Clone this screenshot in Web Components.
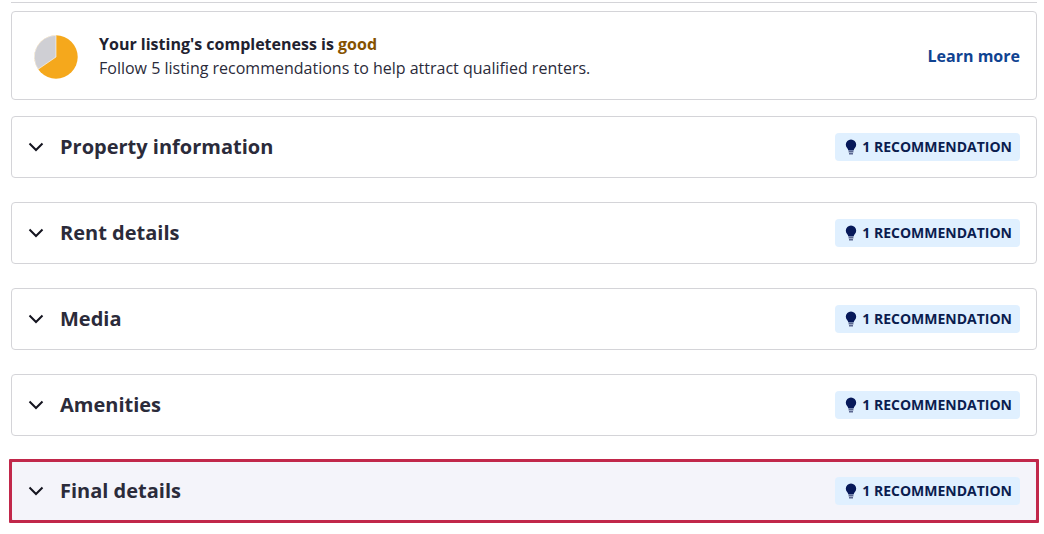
<!DOCTYPE html>
<html>
<head>
<meta charset="utf-8">
<style>
  html, body { margin: 0; background: #fff; }
  body { font-family: "Open Sans", sans-serif; color: #2b2b3a; }
  listing-page { display: block; }
</style>
</head>
<body>
<listing-page>
  <completeness-card level="good" count="5"></completeness-card>
  <section-row title="Property information"></section-row>
  <section-row title="Rent details"></section-row>
  <section-row title="Media"></section-row>
  <section-row title="Amenities"></section-row>
  <section-row title="Final details" focused></section-row>
</listing-page>

<script>
let pageHtml = document.createElement("template");
pageHtml.innerHTML = `
  <style>
    :host { display: block; padding: 2px 7px 0 11px; height: 532px; box-sizing: border-box; }
    .rule { height: 1px; background: #d4d4d8; }
    .stack { display: flex; flex-direction: column; gap: 24px; padding-top: 8px; }
    ::slotted(completeness-card) { margin-bottom: -8px; }
  </style>
  <div class="rule"></div>
  <div class="stack"><slot></slot></div>
`;

class ListingPage extends HTMLElement {
  constructor() {
    super();
    this.attachShadow({ mode: "open" });
    this.shadowRoot.appendChild(pageHtml.content.cloneNode(true));
  }
}

let cardHtml = document.createElement("template");
cardHtml.innerHTML = `
  <style>
    :host { display: block; }
    .card {
      height: 89px; box-sizing: border-box;
      border: 1px solid #d4d4d8; border-radius: 4px;
      display: flex; align-items: center;
      padding: 0 16px 0 22px;
    }
    svg { width: 44px; height: 44px; flex: none; margin: 2px 21px 0 0; }
    .text { flex: 1; font-size: 16px; line-height: 24px; color: #2b2b3a; }
    .title { font-weight: 700; color: #21212f; }
    .level { color: #855200; }
    a { font-size: 16px; font-weight: 700; color: #0f4391; text-decoration: none; }
  </style>
  <div class="card">
    <svg viewBox="0 0 44 44">
      <circle cx="22" cy="22" r="21.7" fill="#f5a81c"/>
      <path d="M22 22 L22 .3 A21.7 21.7 0 0 0 4.1 34.3 Z" fill="#cfcfd4" stroke="#fff" stroke-width=".6"/>
    </svg>
    <div class="text">
      <div class="title">Your listing's completeness is <span class="level"></span></div>
      <div class="sub"></div>
    </div>
    <a href="#">Learn more</a>
  </div>
`;

class CompletenessCard extends HTMLElement {
  constructor() {
    super();
    this.attachShadow({ mode: "open" });
    this.shadowRoot.appendChild(cardHtml.content.cloneNode(true));
    this.shadowRoot.querySelector(".level").innerText = this.getAttribute("level");
    this.shadowRoot.querySelector(".sub").innerText =
      "Follow " + this.getAttribute("count") + " listing recommendations to help attract qualified renters.";
  }
}

let rowHtml = document.createElement("template");
rowHtml.innerHTML = `
  <style>
    :host { display: block; }
    .row {
      position: relative;
      height: 62px; box-sizing: border-box;
      border: 1px solid #d4d4d8; border-radius: 4px;
      display: flex; align-items: center;
      padding: 0 16px;
    }
    :host([focused]) .row { background: #f4f4fa; }
    /* focus ring sits over the row, 1px out top/bottom and 2px out at the sides */
    :host([focused]) .row::after {
      content: ""; position: absolute; inset: -2px -3px;
      border: 3px solid #c1274a; border-radius: 1px;
    }
    .chev { width: 16px; height: 10px; flex: none; margin-right: 16px; }
    h3 { flex: 1; margin: 0 0 2px; font-size: 20px; font-weight: 700; color: #2b2b3a; }
    .badge {
      display: flex; align-items: center; height: 28px; box-sizing: border-box;
      background: #e0f0ff; border-radius: 4px; padding: 0 8px 0 10px;
      font-size: 14px; font-weight: 700; color: #0b1d4f;
    }
    .badge svg { width: 12px; height: 16px; margin-right: 5px; }
    .badge span { padding-bottom: 2px; }
  </style>
  <div class="row">
    <svg class="chev" viewBox="0 0 16 10">
      <path d="M1.5 1.5 L8 8 L14.5 1.5" fill="none" stroke="#14141f" stroke-width="2"/>
    </svg>
    <h3></h3>
    <div class="badge">
      <svg viewBox="0 0 12 16">
        <path d="M6 .5 A5.2 5.2 0 0 0 .8 5.7 C.8 8.2 3 9.4 3.4 11.4 H8.6 C9 9.4 11.2 8.2 11.2 5.7 A5.2 5.2 0 0 0 6 .5 Z" fill="#07195a"/>
        <rect x="3.6" y="12" width="4.8" height="1.5" fill="#5a6690"/>
        <rect x="4" y="14" width="4" height="1.5" fill="#5a6690"/>
      </svg>
      <span>1 RECOMMENDATION</span>
    </div>
  </div>
`;

class SectionRow extends HTMLElement {
  constructor() {
    super();
    this.attachShadow({ mode: "open" });
    this.shadowRoot.appendChild(rowHtml.content.cloneNode(true));
    this.shadowRoot.querySelector("h3").innerText = this.getAttribute("title");
  }
}

customElements.define("listing-page", ListingPage);
customElements.define("completeness-card", CompletenessCard);
customElements.define("section-row", SectionRow);
</script>
</body>
</html>
